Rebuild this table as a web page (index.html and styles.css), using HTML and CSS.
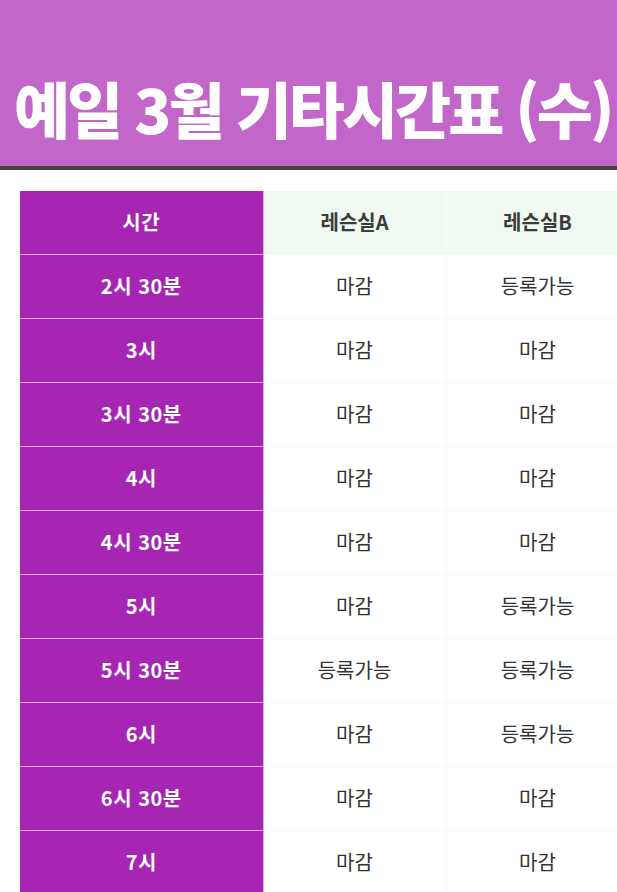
FILE: index.html
```html
<!DOCTYPE html>
<html lang="ko">
<head>
<meta charset="utf-8">
<title>예일 3월 기타시간표 (수)</title>
<link rel="stylesheet" href="styles.css">
</head>
<body>
<header class="banner">
  <h1 class="title">예일 3월 기타시간표 (수)</h1>
</header>
<main class="wrap">
  <table class="schedule">
    <colgroup>
      <col class="c-time"><col class="c-room"><col class="c-room">
    </colgroup>
    <thead>
      <tr><th class="time">시간</th><th class="room">레슨실A</th><th class="room">레슨실B</th></tr>
    </thead>
    <tbody>
      <tr><th class="time">2시 30분</th><td>마감</td><td>등록가능</td></tr>
      <tr><th class="time">3시</th><td>마감</td><td>마감</td></tr>
      <tr><th class="time">3시 30분</th><td>마감</td><td>마감</td></tr>
      <tr><th class="time">4시</th><td>마감</td><td>마감</td></tr>
      <tr><th class="time">4시 30분</th><td>마감</td><td>마감</td></tr>
      <tr><th class="time">5시</th><td>마감</td><td>등록가능</td></tr>
      <tr><th class="time">5시 30분</th><td>등록가능</td><td>등록가능</td></tr>
      <tr><th class="time">6시</th><td>마감</td><td>등록가능</td></tr>
      <tr><th class="time">6시 30분</th><td>마감</td><td>마감</td></tr>
      <tr><th class="time">7시</th><td>마감</td><td>마감</td></tr>
    </tbody>
  </table>
</main>
</body>
</html>
```
FILE: styles.css
```css
html, body {
  margin: 0;
  padding: 0;
  background: #ffffff;
  overflow: hidden;
}
body {
  width: 617px;
  font-family: "Noto Sans CJK KR", "Noto Sans", sans-serif;
}
.banner {
  height: 166px;
  background: #c266c9;
  border-bottom: 4px solid #46434b;
  display: flex;
  align-items: flex-end;
  box-sizing: content-box;
}
.title {
  margin: 0 0 28px 14px;
  color: #ffffff;
  font-size: 61px;
  font-weight: 900;
  line-height: 1;
  letter-spacing: -3px;
  white-space: nowrap;
}
.wrap {
  padding: 21px 0 0 20px;
}
.schedule {
  border-collapse: collapse;
  table-layout: fixed;
  width: 609px;
}
.c-time { width: 243px; }
.c-room { width: 183px; }
.schedule tr { height: 64px; }
.schedule thead tr { height: 63px; }
.schedule th, .schedule td {
  padding: 0 0 2px 0;
  text-align: center;
  vertical-align: middle;
  font-size: 20px;
}
.time {
  background: #a626b3;
  color: #ffffff;
  font-weight: 700;
  letter-spacing: 0.5px;
  border-bottom: 1px solid #e8a4ec;
  border-right: 1px solid #e8a4ec;
}
.room {
  background: #f0f8f2;
  color: #3c3c3c;
  font-weight: 700;
  border-left: 1px solid #fafdfb;
  border-right: 1px solid #fafdfb;
  border-bottom: 1px solid #f6f8f6;
}
.schedule td {
  color: #333333;
  font-weight: 400;
  border-bottom: 1px solid #f8f8f6;
  border-right: 1px solid #f8f8f6;
}
```
